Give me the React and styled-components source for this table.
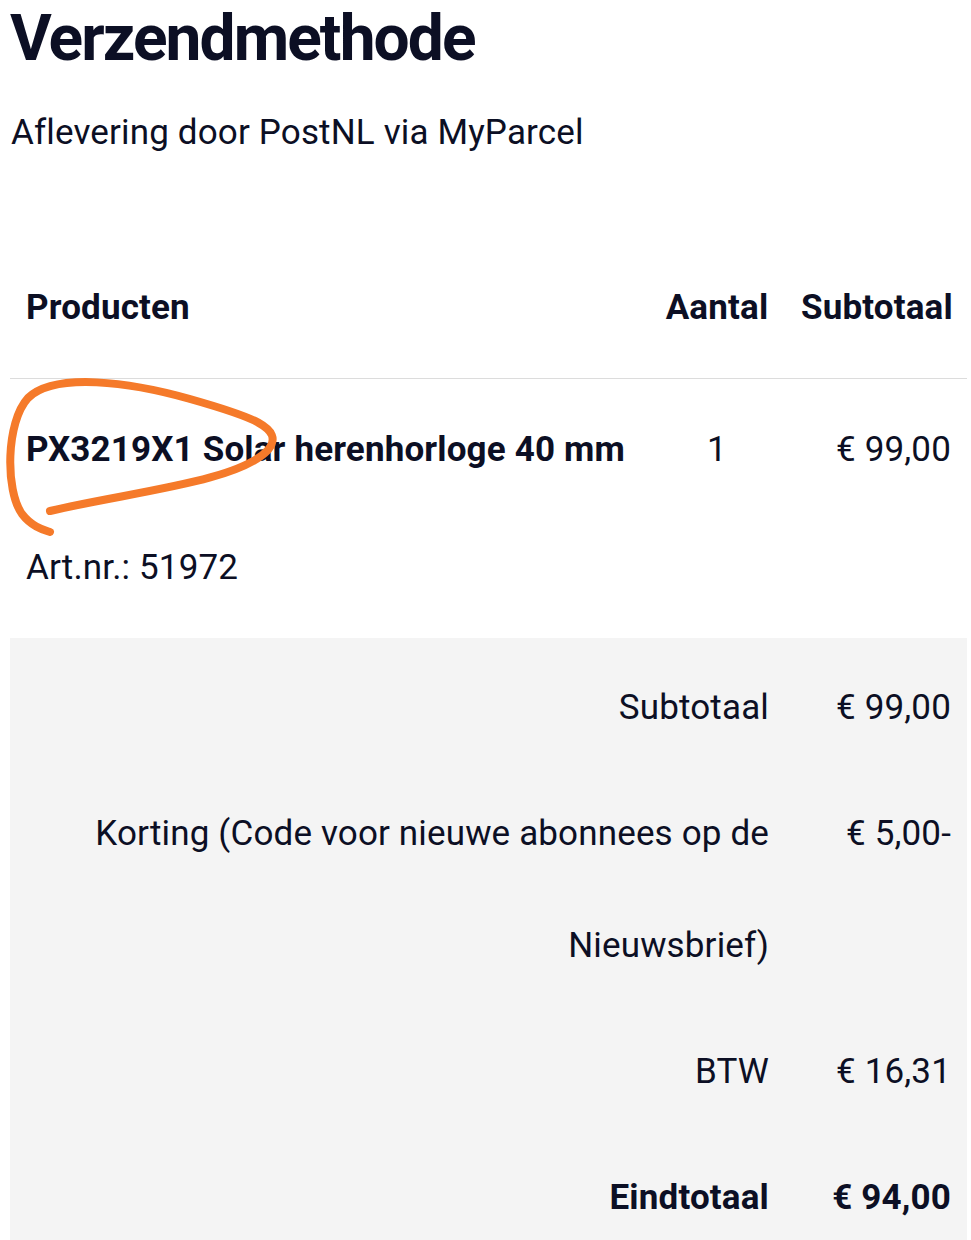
import React from "react";
import styled, { createGlobalStyle } from "styled-components";

const GlobalStyle = createGlobalStyle`
  * {
    box-sizing: border-box;
  }
  body {
    margin: 0;
    background: #ffffff;
    font-family: Roboto, "Liberation Sans", sans-serif;
    color: #0c0f24;
  }
`;

const Page = styled.div`
  position: relative;
  padding: 1px 4px 0 10px;
`;

const Title = styled.h1`
  font-size: 64px;
  font-weight: 700;
  line-height: 76px;
  margin: 0;
  letter-spacing: -1.9px;
`;

const Method = styled.p`
  font-size: 35px;
  font-weight: 400;
  line-height: 38px;
  margin: 37px 0 0 1px;
  letter-spacing: 0.15px;
`;

const OrderTable = styled.table`
  width: 100%;
  margin-top: 82px;
  border-collapse: collapse;
  table-layout: fixed;
  font-size: 35px;
  letter-spacing: 0.15px;
`;

const HeadCell = styled.th`
  padding: 18px 16px 14px;
  line-height: 112px;
  font-weight: 700;
  text-align: ${(p) => p.$align || "left"};
  width: ${(p) => p.$width || "auto"};
  border-bottom: 1px solid #dcdcdc;
  vertical-align: top;
`;

const Cell = styled.td`
  padding: 15px 16px 14px;
  line-height: 112px;
  text-align: ${(p) => p.$align || "left"};
  vertical-align: top;
`;

const ProductName = styled.div`
  font-weight: 700;
`;

const ArtNr = styled.div`
  margin-top: 6px;
`;

const Totals = styled.tbody`
  background: #f4f4f4;
`;

const TotalCell = styled.td`
  padding: 14px 16px 0;
  line-height: 112px;
  text-align: right;
  vertical-align: top;
  font-weight: ${(p) => (p.$strong ? 700 : 400)};
`;

const Annotation = styled.svg`
  position: absolute;
  left: 0;
  top: 0;
  pointer-events: none;
`;

const totals = [
  { label: "Subtotaal", value: "€ 99,00" },
  { label: "Korting (Code voor nieuwe abonnees op de Nieuwsbrief)", value: "€ 5,00-" },
  { label: "BTW", value: "€ 16,31" },
  { label: "Eindtotaal", value: "€ 94,00", strong: true },
];

const App = () => {
  return (
    <>
      <GlobalStyle />
      <Page>
        <Title>Verzendmethode</Title>
        <Method>Aflevering door PostNL via MyParcel</Method>
        <OrderTable>
          <thead>
            <tr>
              <HeadCell>Producten</HeadCell>
              <HeadCell $align="center" $width="136px">
                Aantal
              </HeadCell>
              <HeadCell $align="right" $width="182px">
                Subtotaal
              </HeadCell>
            </tr>
          </thead>
          <tbody>
            <tr>
              <Cell>
                <ProductName>PX3219X1 Solar herenhorloge 40 mm</ProductName>
                <ArtNr>Art.nr.: 51972</ArtNr>
              </Cell>
              <Cell $align="center">1</Cell>
              <Cell $align="right">€ 99,00</Cell>
            </tr>
          </tbody>
          <Totals>
            {totals.map((t) => (
              <tr key={t.label}>
                <TotalCell colSpan={2} $strong={t.strong}>
                  {t.label}
                </TotalCell>
                <TotalCell $strong={t.strong}>{t.value}</TotalCell>
              </tr>
            ))}
          </Totals>
        </OrderTable>
        <Annotation width="971" height="1240" viewBox="0 0 971 1240">
          <path
            d="M50 511 C 130 492, 238 482, 268 450 C 286 428, 250 416, 190 399 C 130 382, 55 372, 28 398 C 6 422, 5 490, 22 514 C 32 527, 44 530, 50 532"
            fill="none"
            stroke="#f57a2a"
            strokeWidth="8"
            strokeLinecap="round"
            strokeLinejoin="round"
          />
        </Annotation>
      </Page>
    </>
  );
};

export default App;
